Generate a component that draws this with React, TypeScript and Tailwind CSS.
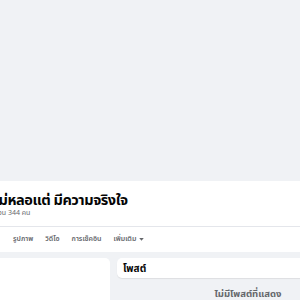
import React from 'react';

const tabs = ['รูปภาพ', 'วิดีโอ', 'การเช็คอิน'];

const App: React.FC = () => {
  return (
    <div
      className="w-[300px] h-[300px] overflow-hidden bg-[#f0f2f5]"
      style={{ fontFamily: '"Noto Sans", "Noto Sans Thai", Roboto, sans-serif' }}
    >
      {/* cover */}
      <div className="h-[181px] bg-[#f0f2f5]" />

      {/* profile header */}
      <div className="bg-white h-[71px] flex flex-col">
        <div className="h-[46px] flex flex-col pt-[9px] ml-[-6px] border-b border-[#e4e6eb]">
          <h1 className="text-[14.5px] leading-[18px] font-bold tracking-[-0.45px] text-[#050505] whitespace-nowrap">
            ไม่หลอแต่ มีความจริงใจ
          </h1>
          <p className="text-[7px] leading-[10px] text-[#65676b] whitespace-nowrap ml-[-3px]">เพื่อน 344 คน</p>
        </div>
        <div className="flex items-center h-[25px] pl-[7px] text-[7px] font-semibold text-[#65676b]">
          {tabs.map((t) => (
            <span key={t} className="px-[6px] whitespace-nowrap">
              {t}
            </span>
          ))}
          <span className="px-[6px] whitespace-nowrap flex items-center gap-[3px]">
            เพิ่มเติม
            <svg width="5" height="3" viewBox="0 0 6 4">
              <path d="M0 0h6L3 3.5z" fill="#65676b" />
            </svg>
          </span>
        </div>
      </div>

      {/* body */}
      <div className="flex gap-[7px] pt-[6px]">
        <div className="w-[110px] shrink-0 h-[60px] bg-white rounded-r-[5px]" />
        <div className="w-[262px] shrink-0 flex flex-col">
          <div className="h-[20px] bg-white rounded-[5px] shadow-[0_1px_1px_rgba(0,0,0,0.08)] flex items-center px-[6px]">
            <span className="text-[10px] font-bold text-[#050505]">โพสต์</span>
          </div>
          <p className="mt-[9px] text-center text-[9.5px] font-bold text-[#65676b] whitespace-nowrap">
            ไม่มีโพสต์ที่แสดง
          </p>
        </div>
      </div>
    </div>
  );
};

export default App;
